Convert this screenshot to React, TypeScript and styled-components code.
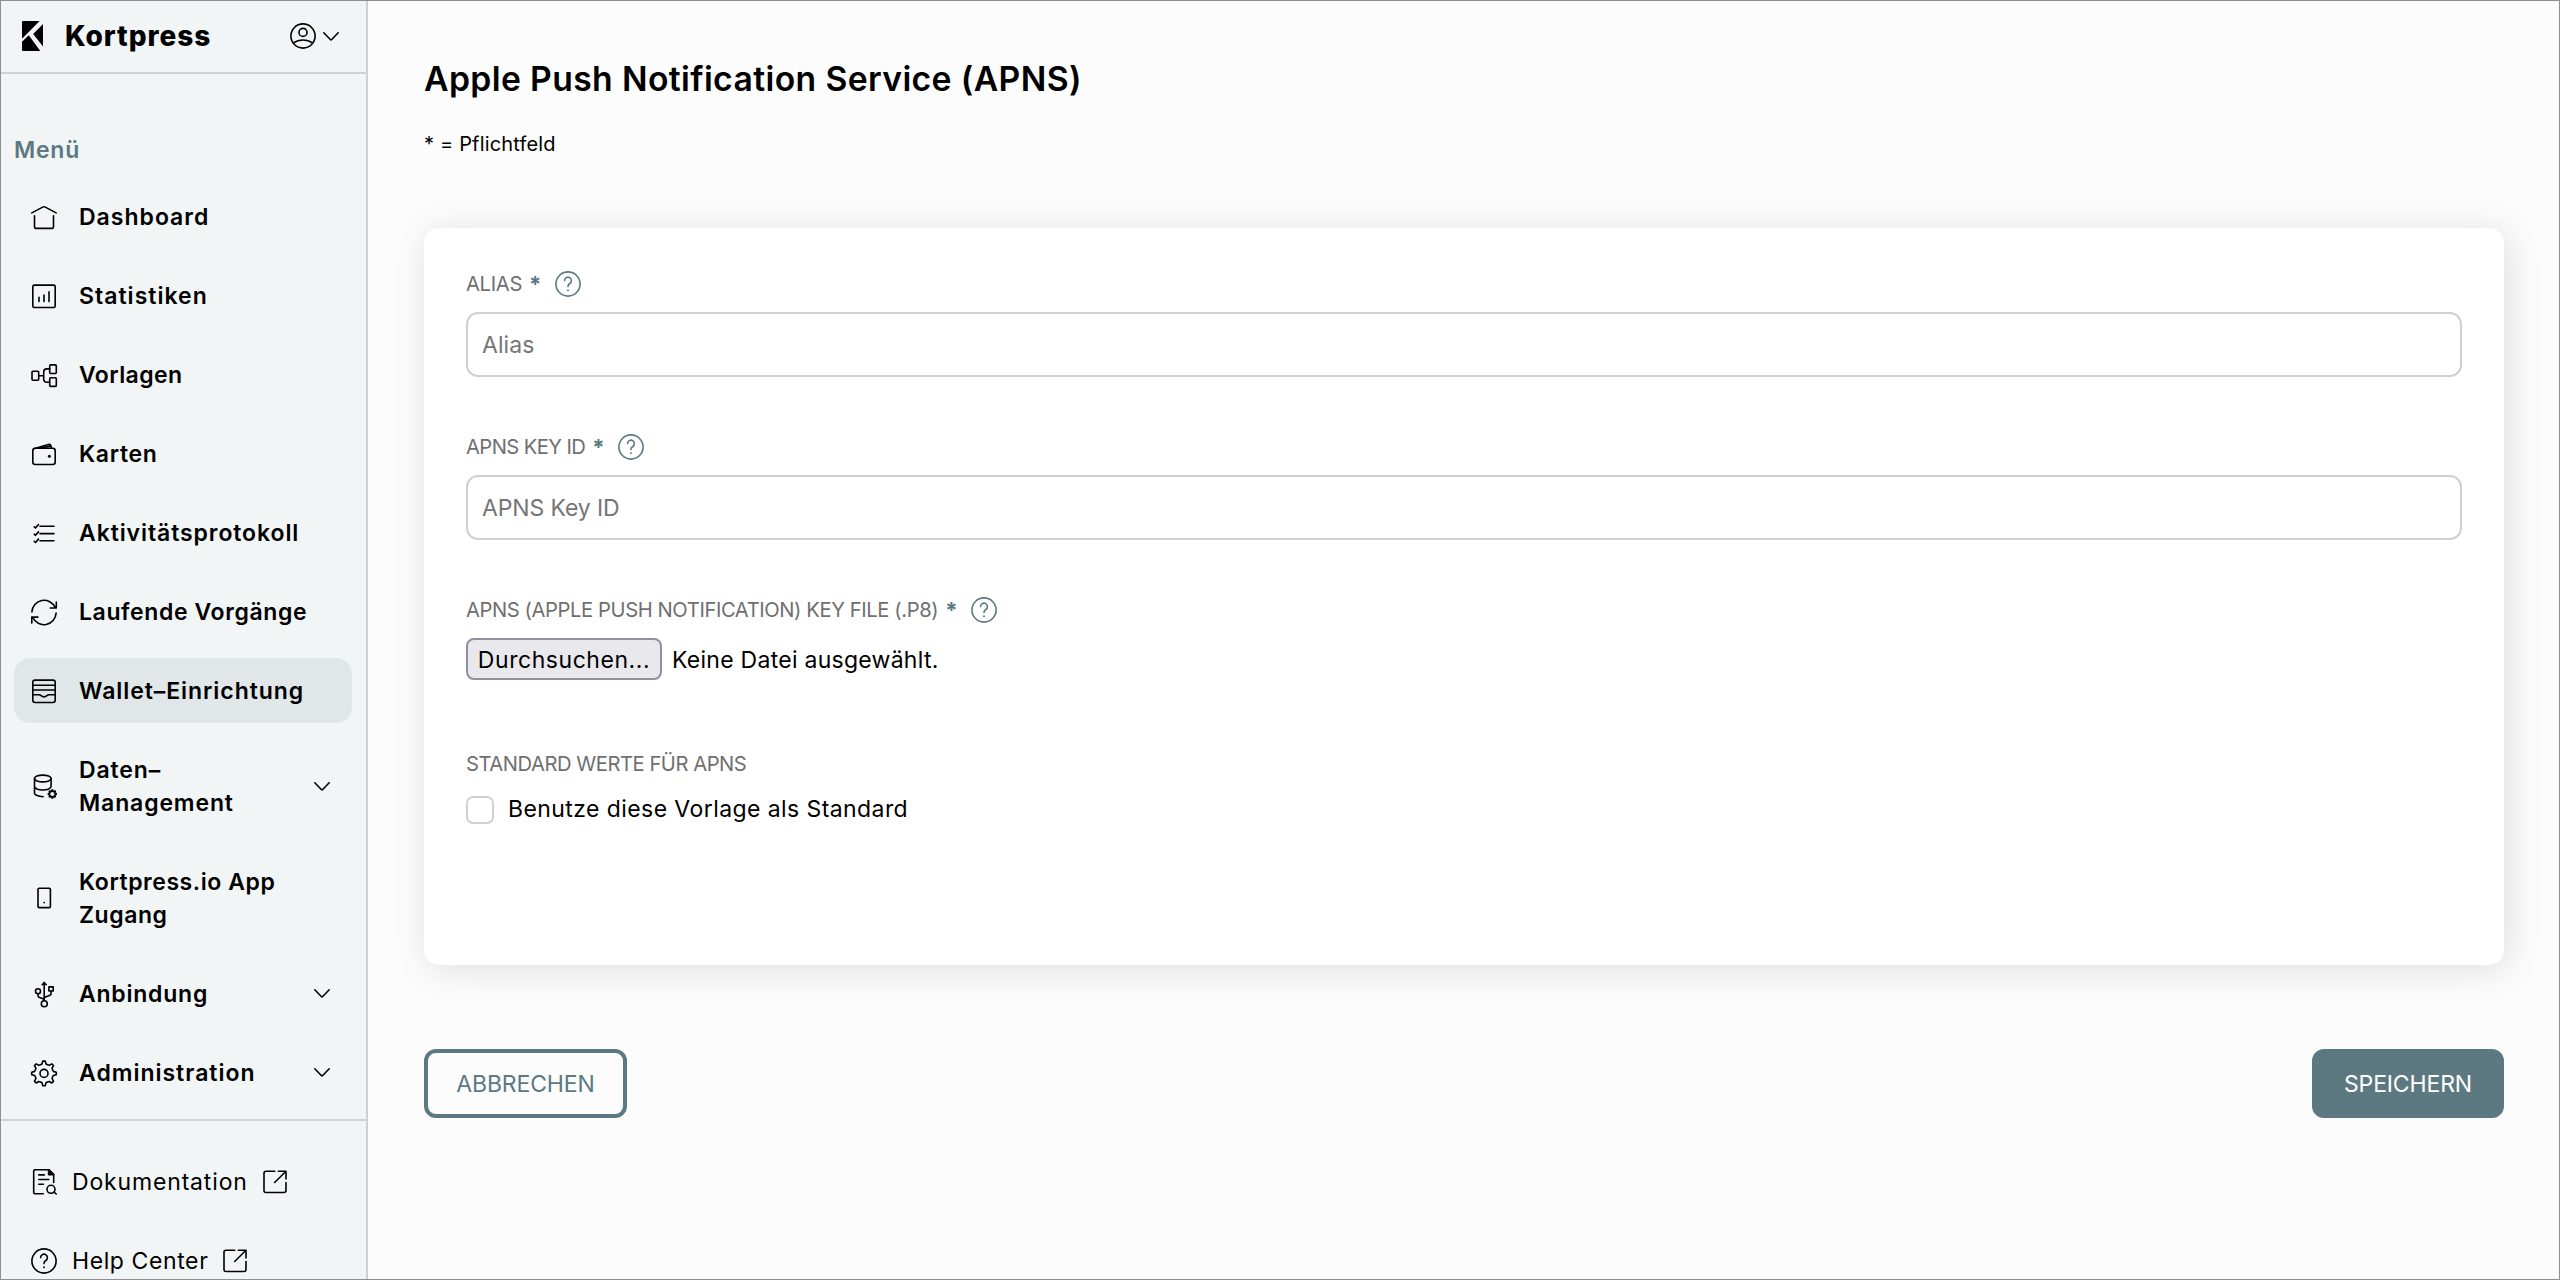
import React from 'react';
import styled, { createGlobalStyle } from 'styled-components';

const color = {
  ink: '#000000',
  teal: '#5c7982',
  label: '#6f6f6f',
  placeholder: '#757575',
  line: '#d0d0d0',
  frame: '#8f8f8f',
  sidebar: '#f1f5f6',
  active: '#e1e7e9',
  page: '#fcfcfc',
};

const GlobalStyle = createGlobalStyle`
  *, *::before, *::after { box-sizing: border-box; }
  body { margin: 0; font-family: Inter, "Liberation Sans", sans-serif; color: ${color.ink}; }
  button, input { font: inherit; }
`;

const Shell = styled.div`
  display: flex;
  width: 100%;
  height: 100vh;
  overflow: hidden;
  border: 1px solid ${color.frame};
  background: ${color.page};
`;

const Sidebar = styled.aside`
  display: flex;
  flex-direction: column;
  flex: none;
  width: 367px;
  height: 100%;
  overflow: hidden;
  border-right: 2px solid ${color.line};
  background: ${color.sidebar};
`;

const Brand = styled.header`
  display: flex;
  align-items: center;
  flex: none;
  height: 73px;
  padding: 0 27px 1px 21px;
  border-bottom: 2px solid ${color.line};
`;

const BrandName = styled.span`
  margin-left: 22px;
  font-size: 28px;
  font-weight: 800;
  letter-spacing: 0.95px;
`;

const Account = styled.button`
  display: flex;
  align-items: center;
  gap: 7px;
  margin-left: auto;
  padding: 0;
  border: 0;
  background: none;
  color: inherit;
`;

const Nav = styled.nav`
  display: flex;
  flex-direction: column;
  flex: none;
  padding: 59px 14px 14px 13px;
`;

const NavHeading = styled.div<{ $track: number }>`
  margin-bottom: 18px;
  padding-top: 1px;
  font-size: 23px;
  font-weight: 600;
  line-height: 32px;
  letter-spacing: ${p => p.$track}px;
  color: ${color.teal};
`;

const NavList = styled.div`
  display: flex;
  flex-direction: column;
  gap: 14px;
`;

const NavItem = styled.a<{ $active?: boolean }>`
  display: flex;
  align-items: center;
  padding: 16px 22px 16px 17px;
  border-radius: 16px;
  background: ${p => (p.$active ? color.active : 'transparent')};
`;

const NavText = styled.span<{ $track: number }>`
  margin: 1px 0 -1px 22px;
  font-size: 23px;
  font-weight: 600;
  line-height: 33px;
  letter-spacing: ${p => p.$track}px;
  white-space: pre-line;
`;

const Push = styled.span`
  display: flex;
  margin-left: auto;
`;

const Support = styled.div`
  display: flex;
  flex-direction: column;
  flex: none;
  gap: 14px;
  padding: 28px 14px 0 13px;
  border-top: 2px solid ${color.line};
`;

const SupportLink = styled.a<{ $track: number }>`
  display: flex;
  align-items: center;
  height: 65px;
  padding-left: 17px;
  font-size: 23px;
  letter-spacing: ${p => p.$track}px;
  white-space: nowrap;
`;

const SupportText = styled.span`
  margin: 0 15px 0 15px;
`;

const Main = styled.main`
  display: flex;
  flex-direction: column;
  flex: 1;
  min-width: 0;
  padding: 57px 55px 0 56px;
`;

const Title = styled.h1`
  margin: 0;
  font-size: 33.7px;
  font-weight: 600;
  line-height: 42px;
  letter-spacing: 0.38px;
`;

const Hint = styled.p`
  margin: 32px 0 0;
  font-size: 20px;
  line-height: 24px;
  letter-spacing: 0.16px;
`;

const Card = styled.section`
  display: flex;
  flex-direction: column;
  height: 737px;
  margin-top: 72px;
  padding: 43px 42px 0;
  border-radius: 15px;
  background: #ffffff;
  box-shadow: 4px 4px 38px rgba(0, 0, 0, 0.12);
`;

const Field = styled.div<{ $after?: number }>`
  display: flex;
  flex-direction: column;
  align-items: stretch;
  margin-bottom: ${p => p.$after ?? 57}px;
`;

const LabelRow = styled.div`
  display: flex;
  align-items: center;
  height: 26px;
  margin-bottom: 15px;
`;

const Label = styled.label<{ $track: number }>`
  padding-bottom: 2px;
  font-size: 20.2px;
  letter-spacing: ${p => p.$track}px;
  color: ${color.label};
  white-space: nowrap;
`;

const Required = styled.span`
  width: 12px;
  margin: 0 14px 0 7px;
  font-size: 22px;
  line-height: 26px;
  font-weight: 700;
  color: ${color.teal};
`;

const HelpButton = styled.span`
  display: flex;
  color: ${color.teal};
`;

const TextInput = styled.input<{ $track: number }>`
  width: 100%;
  height: 65px;
  padding: 0 14px;
  border: 2px solid ${color.line};
  border-radius: 12px;
  outline: 0;
  background: #ffffff;
  font-size: 23px;
  letter-spacing: ${p => p.$track}px;
  &::placeholder { color: ${color.placeholder}; opacity: 1; }
`;

const FileRow = styled.div`
  display: flex;
  align-items: center;
  gap: 10px;
  font-size: 23px;
  letter-spacing: 0.27px;
`;

const FileButton = styled.button`
  width: 196px;
  height: 42px;
  padding: 1px 0 0;
  border: 2px solid #8f8f9d;
  border-radius: 8px;
  background: #e9e9ed;
  color: inherit;
  letter-spacing: 0.55px;
`;

const FileName = styled.span`
  padding-top: 1px;
`;

const CheckRow = styled.label`
  display: flex;
  align-items: center;
  gap: 14px;
  height: 28px;
  margin-top: 4px;
  font-size: 23px;
  letter-spacing: 0.42px;
`;

const Checkbox = styled.input`
  appearance: none;
  width: 28px;
  height: 28px;
  margin: 0;
  border: 2px solid ${color.line};
  border-radius: 7px;
  background: #ffffff;
`;

const CheckText = styled.span`
  line-height: 28px;
  padding-bottom: 3px;
`;

const Actions = styled.div`
  display: flex;
  justify-content: space-between;
  margin-top: 84px;
`;

const ActionButton = styled.button<{ $primary?: boolean }>`
  width: ${p => (p.$primary ? 192 : 203)}px;
  height: 69px;
  padding: 0;
  border: 4px solid ${color.teal};
  border-radius: 12px;
  background: ${p => (p.$primary ? color.teal : 'transparent')};
  color: ${p => (p.$primary ? '#ffffff' : color.teal)};
  font-size: 23px;
  letter-spacing: -0.15px;
`;

const Svg = styled.svg`
  display: block;
  flex: none;
  overflow: visible;
  fill: none;
  stroke: currentColor;
  stroke-width: 1.6;
  stroke-linecap: round;
  stroke-linejoin: round;
`;

const Icon = ({ children }: { children: React.ReactNode }) => (
  <Svg width="26" height="26" viewBox="0 0 26 26">{children}</Svg>
);

const gearPath = (cx: number, cy: number, outer: number, inner: number, teeth = 8) => {
  const step = (Math.PI * 2) / teeth;
  const pt = (r: number, a: number) =>
    `${(cx + r * Math.sin(a)).toFixed(2)} ${(cy - r * Math.cos(a)).toFixed(2)}`;
  let d = '';
  for (let i = 0; i < teeth; i++) {
    const a = i * step;
    d += `${i ? 'L' : 'M'}${pt(inner, a - step * 0.27)}L${pt(outer, a - step * 0.13)}`;
    d += `A${outer} ${outer} 0 0 1 ${pt(outer, a + step * 0.13)}L${pt(inner, a + step * 0.27)}`;
    d += `Q${pt(inner * 0.95, a + step * 0.5)} ${pt(inner, a + step * 0.73)}`;
  }
  return d + 'Z';
};

const Chevron = () => (
  <Svg width="16" height="9" viewBox="0 0 16 9">
    <path d="M.8.8 7.3 7.5q.7.7 1.4 0L15.2.8" />
  </Svg>
);

const Logo = () => (
  <Svg width="21" height="30" viewBox="0 0 62 88" preserveAspectRatio="none">
    <path
      d="M3 0H52L0 52V3Q0 0 3 0ZM62 9V75L33 38ZM0 61 20 42 54 88H3Q0 88 0 85Z"
      fill="currentColor"
      stroke="none"
    />
  </Svg>
);

const AvatarIcon = () => (
  <Icon>
    <circle cx="13" cy="13" r="12.1" />
    <circle cx="13" cy="9.4" r="4" />
    <path d="M3.6 19.8Q7.5 17 13 17t9.4 2.8" />
  </Icon>
);

const HelpIcon = () => (
  <Icon>
    <circle cx="13" cy="13" r="12.1" />
    <path d="M9.6 9.6a3.4 3.4 0 1 1 5.2 2.9Q13 13.6 13 15.6" />
    <circle cx="13" cy="19.2" r=".95" fill="currentColor" stroke="none" />
  </Icon>
);

const ExternalIcon = () => (
  <Svg width="24" height="24" viewBox="0 0 24 24">
    <path d="M11.8 1.3H3Q1 1.3 1 3.3V20.5Q1 22.5 3 22.5H21Q23 22.5 23 20.5V12.6" />
    <path d="M15.3 1.3H23V9M23 1.3 11.6 12.5" />
  </Svg>
);

const HomeIcon = () => (
  <Icon>
    <path d="M.8 8.9 12.2 2.9q.8-.4 1.6 0L25.2 8.9" />
    <path d="M3.5 11.9V22.4q0 2 2 2h15q2 0 2-2V11.9" />
  </Icon>
);

const StatsIcon = () => (
  <Icon>
    <rect x="1.8" y="2.1" width="22.4" height="22.4" rx="1.6" />
    <path d="M8 14.4v4.2M13 12v6.6M18 8.7v9.9" />
  </Icon>
);

const TemplatesIcon = () => (
  <Icon>
    <rect x="1" y="9.2" width="6.7" height="9" rx="1" />
    <rect x="18.7" y="2.9" width="6.6" height="8.6" rx="1" />
    <rect x="18.7" y="15.8" width="6.6" height="8.6" rx="1" />
    <path d="M7.7 13.8h5M18.7 6.9H16a3.3 3.3 0 0 0-3.3 3.3V17a3.3 3.3 0 0 0 3.3 3.3h2.7" />
  </Icon>
);

const WalletIcon = () => (
  <Icon>
    <rect x="1.8" y="7.3" width="22.4" height="16.2" rx="2.4" />
    <path d="M3.6 7.4 17.4 3.5q2-.4 2.5 1.2l.7 2.5M9.500 7.2 19.3 5.1" />
    <circle cx="18.4" cy="15.3" r="1.5" fill="currentColor" stroke="none" />
  </Icon>
);

const ChecklistIcon = () => (
  <Icon>
    <path d="M9 6.2h14M9 13.6h14M9 20.8h14" />
    <path d="M3.2 6.8l1.3 1.1 3-3.4M3.2 14.2l1.3 1.1 3-3.4M3.2 21.4l1.3 1.1 3-3.4" />
  </Icon>
);

const SyncIcon = () => (
  <Icon>
    <path d="M.9 12.9A12.2 12.2 0 0 1 24.2 8.5M25.3 3V9H19.2" />
    <path d="M25.1 14.1A12.2 12.2 0 0 1 1.8 18.5M.8 24.1V18.1H6.9" />
  </Icon>
);

const SetupIcon = () => (
  <Icon>
    <rect x="1.8" y="2.1" width="22.4" height="22.4" rx="2.2" />
    <path d="M1.8 7.2h22.4M1.8 12h22.4M1.8 16.7H8q1.300 0 2 1 3 2.400 6 0 .7-1 2-1h6.2" />
  </Icon>
);

const DatabaseIcon = () => (
  <Icon>
    <ellipse cx="11.8" cy="5.5" rx="8.3" ry="3.4" />
    <path d="M3.5 5.5V20.2q.4 3 8.7 3.5M20.1 5.5v8q-1.1 3.5-8.3 3.5t-8.300-3.5" />
    <path d={gearPath(21.3, 21, 3.9, 2.8)} />
  </Icon>
);

const PhoneIcon = () => (
  <Icon>
    <rect x="7" y="3.2" width="12.4" height="19.4" rx="1.2" />
    <circle cx="13.2" cy="17.6" r=".9" fill="currentColor" stroke="none" />
  </Icon>
);

const UsbIcon = () => (
  <Icon>
    <path d="M13.2 19.5V1.5M11.2 3.7l2-2.3 2 2.3" />
    <circle cx="13.3" cy="22.8" r="3" />
    <circle cx="7" cy="10.2" r="2.5" />
    <rect x="17.9" y="5.9" width="4.3" height="4.1" />
    <path d="M7 12.7V14.8q0 1 1 1.4l5.2 2.1M20 10v3q0 1-1 1.3l-5.8 2.2" />
  </Icon>
);

const GearIcon = () => (
  <Icon>
    <path d={gearPath(13, 13.4, 12.3, 9.6)} />
    <circle cx="13" cy="13.4" r="4" />
  </Icon>
);

const DocIcon = () => (
  <Icon>
    <path d="M12.3 24.7H3.9q-1.2 0-1.2-1.2V1.9q0-1.2 1.2-1.2H18L22.7 5.4v8.1" />
    <path d="M17.6.9V5.6h4.9Z" fill="currentColor" />
    <path d="M7.8 5.9h5.5M7.8 10.5h10M7.8 15.3h4.5M23 23l2.2 2" />
    <circle cx="20" cy="20.3" r="4" />
  </Icon>
);

const navItems = [
  { label: 'Dashboard', icon: <HomeIcon />, track: 1 },
  { label: 'Statistiken', icon: <StatsIcon />, track: 1.02 },
  { label: 'Vorlagen', icon: <TemplatesIcon />, track: 0.41 },
  { label: 'Karten', icon: <WalletIcon />, track: 0.67 },
  { label: 'Aktivitätsprotokoll', icon: <ChecklistIcon />, track: 0.91 },
  { label: 'Laufende Vorgänge', icon: <SyncIcon />, track: 0.61 },
  { label: 'Wallet–Einrichtung', icon: <SetupIcon />, track: 0.94, active: true },
  { label: 'Daten–\nManagement', icon: <DatabaseIcon />, track: 0.86, menu: true },
  { label: 'Kortpress.io App\nZugang', icon: <PhoneIcon />, track: 0.56 },
  { label: 'Anbindung', icon: <UsbIcon />, track: 0.77, menu: true },
  { label: 'Administration', icon: <GearIcon />, track: 0.99, menu: true },
];

const FieldLabel = ({ text, track, htmlFor }: { text: string; track: number; htmlFor: string }) => (
  <LabelRow>
    <Label htmlFor={htmlFor} $track={track}>{text}</Label>
    <Required>*</Required>
    <HelpButton><HelpIcon /></HelpButton>
  </LabelRow>
);

export default function App() {
  return (
    <>
      <GlobalStyle />
      <Shell>
        <Sidebar>
          <Brand>
            <Logo />
            <BrandName>Kortpress</BrandName>
            <Account>
              <AvatarIcon />
              <Chevron />
            </Account>
          </Brand>
          <Nav>
            <NavHeading $track={0.75}>Menü</NavHeading>
            <NavList>
              {navItems.map(item => (
                <NavItem key={item.label} $active={item.active}>
                  {item.icon}
                  <NavText $track={item.track}>{item.label}</NavText>
                  {item.menu && <Push><Chevron /></Push>}
                </NavItem>
              ))}
            </NavList>
          </Nav>
          <Support>
            <SupportLink $track={0.84}>
              <DocIcon />
              <SupportText>Dokumentation</SupportText>
              <ExternalIcon />
            </SupportLink>
            <SupportLink $track={0.6}>
              <HelpIcon />
              <SupportText>Help Center</SupportText>
              <ExternalIcon />
            </SupportLink>
          </Support>
        </Sidebar>
        <Main>
          <Title>Apple Push Notification Service (APNS)</Title>
          <Hint>* = Pflichtfeld</Hint>
          <Card>
            <Field>
              <FieldLabel text="ALIAS" track={-0.32} htmlFor="alias" />
              <TextInput id="alias" placeholder="Alias" $track={0.09} />
            </Field>
            <Field>
              <FieldLabel text="APNS KEY ID" track={-0.58} htmlFor="key-id" />
              <TextInput id="key-id" placeholder="APNS Key ID" $track={-0.12} />
            </Field>
            <Field $after={71}>
              <FieldLabel
                text="APNS (APPLE PUSH NOTIFICATION) KEY FILE (.P8)"
                track={-0.41}
                htmlFor="key-file"
              />
              <FileRow>
                <FileButton id="key-file">Durchsuchen...</FileButton>
                <FileName>Keine Datei ausgewählt.</FileName>
              </FileRow>
            </Field>
            <Field $after={0}>
              <LabelRow>
                <Label $track={-0.46}>STANDARD WERTE FÜR APNS</Label>
              </LabelRow>
              <CheckRow>
                <Checkbox type="checkbox" />
                <CheckText>Benutze diese Vorlage als Standard</CheckText>
              </CheckRow>
            </Field>
          </Card>
          <Actions>
            <ActionButton>ABBRECHEN</ActionButton>
            <ActionButton $primary>SPEICHERN</ActionButton>
          </Actions>
        </Main>
      </Shell>
    </>
  );
}
